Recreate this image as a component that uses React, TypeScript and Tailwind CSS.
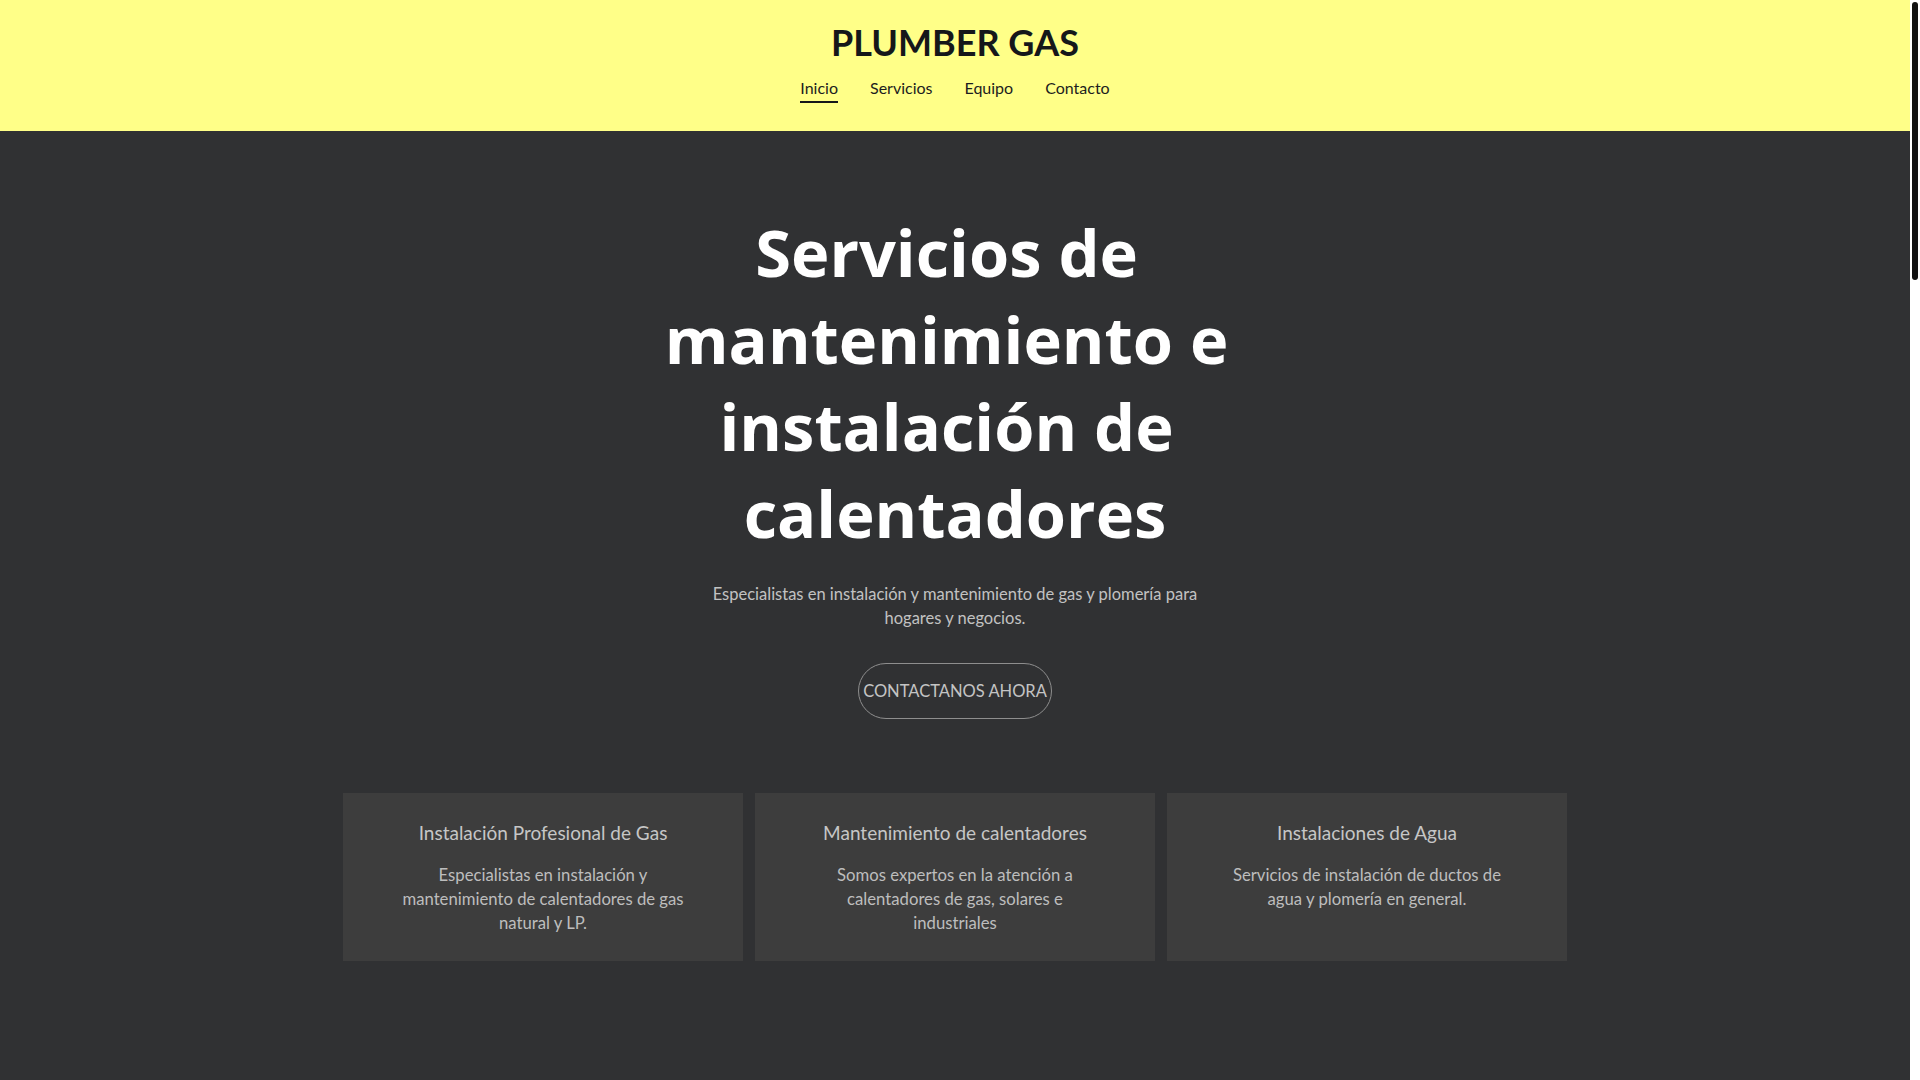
import React from "react";

const body = { fontFamily: "Lato, 'Noto Sans', sans-serif" };
const head = { fontFamily: "'Open Sans', 'Noto Sans', sans-serif" };

const cards = [
  {
    title: "Instalación Profesional de Gas",
    lines: ["Especialistas en instalación y", "mantenimiento de calentadores de gas", "natural y LP."],
  },
  {
    title: "Mantenimiento de calentadores",
    lines: ["Somos expertos en la atención a", "calentadores de gas, solares e", "industriales"],
  },
  {
    title: "Instalaciones de Agua",
    lines: ["Servicios de instalación de ductos de", "agua y plomería en general."],
  },
];

export default function App() {
  return (
    <div className="relative min-h-screen w-full bg-[#303133] pr-[10px]" style={body}>
      <header className="flex h-[131px] flex-col items-center bg-[#ffff88]">
        <h1 className="mt-[22px] text-[36px] font-bold leading-[40px] text-[#15171a]">PLUMBER GAS</h1>
        <nav className="mt-[14px] flex gap-[32px] text-[16px] leading-[24px] text-[#1c1d20]">
          <a className="relative">
            Inicio
            <span className="absolute left-0 right-0 top-[25px] h-[2px] bg-[#15171a]" />
          </a>
          <a>Servicios</a>
          <a>Equipo</a>
          <a>Contacto</a>
        </nav>
      </header>

      <main className="flex min-h-[4040px] flex-col items-center bg-[#303133]">
        <h2
          className="mt-[78px] max-w-[640px] whitespace-break-spaces text-center text-[65px] font-bold leading-[87px] text-white"
          style={head}
        >
          Servicios de mantenimiento e instalación de calentadores
        </h2>
        <p className="mt-[25px] text-center text-[16.5px] leading-[24px] text-[#c2c2c2]">
          Especialistas en instalación y mantenimiento de gas y plomería para
          <br />
          hogares y negocios.
        </p>
        <button className="mt-[33px] flex h-[56px] w-[194px] items-center justify-center rounded-full border border-[#8e8e8e] text-[16.5px] text-[#c4c4c4]">
          CONTACTANOS AHORA
        </button>

        <section className="mt-[74px] grid w-[1224px] grid-cols-3 gap-[12px]">
          {cards.map((c) => (
            <div key={c.title} className="flex flex-col items-center bg-[#3d3d3d] px-6 pb-[26px] pt-[28px] text-center">
              <h3 className="text-[19px] leading-[24px] text-[#c6c6c6]">{c.title}</h3>
              <p className="mt-[18px] text-[16.7px] leading-[24px] text-[#bdbdbd]">
                {c.lines.map((l, i) => (
                  <React.Fragment key={i}>
                    {l}
                    {i < c.lines.length - 1 && <br />}
                  </React.Fragment>
                ))}
              </p>
            </div>
          ))}
        </section>
      </main>

      <div className="fixed right-0 top-0 h-screen w-[10px] bg-white">
        <div className="ml-[2px] mt-[2px] h-[278px] w-[6px] rounded-full bg-[#111111]" />
      </div>
    </div>
  );
}
